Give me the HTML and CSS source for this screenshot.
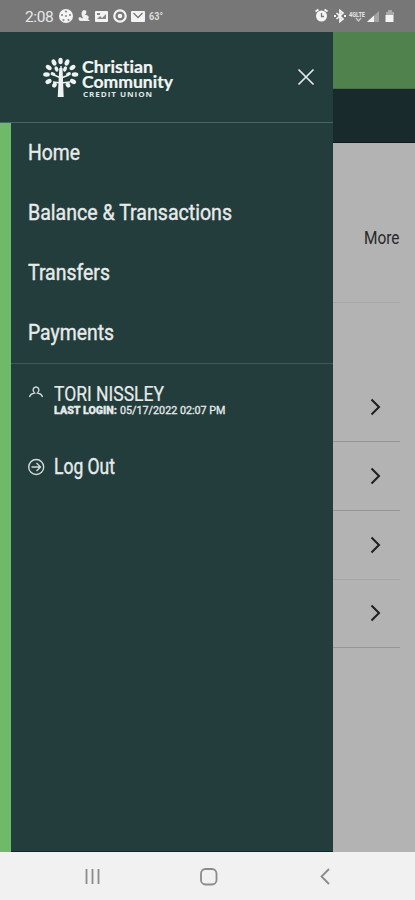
FILE: index.html
```html
<!DOCTYPE html>
<html lang="en">
<head>
<meta charset="utf-8">
<title>Christian Community Credit Union</title>
<link rel="stylesheet" href="styles.css">
</head>
<body>
<div class="phone">
  <header class="status">
    <span class="clock">2:08</span>
    <svg class="status-left" width="108" height="18" viewBox="0 0 108 18">
      <circle cx="8" cy="9" r="7" fill="#f4f4f4"/>
      <g fill="#888"><circle cx="8" cy="9" r="1"/><circle cx="8" cy="4.500" r="1.1"/><circle cx="12" cy="8" r="1.1"/><circle cx="4" cy="8" r="1.1"/><circle cx="5.500" cy="13" r="1.1"/><circle cx="10.500" cy="13" r="1.1"/></g>
      <path d="M26 3c3 0 3 3 1 5 3 0 5 2 3 4l2 2H23c-3 0-3-4-1-4 1 0 1 2 3 1-2-3-2-7 1-8z" fill="#eee"/>
      <rect x="37" y="4" width="13" height="11" rx="1" fill="#f4f4f4"/>
      <path d="M39 12l3-3 2 2 4-4v5zM39 6h3v2h-3z" fill="#888"/>
      <circle cx="62" cy="9" r="5.700" fill="#777" stroke="#f4f4f4" stroke-width="2.200"/><circle cx="62" cy="9" r="2.300" fill="#f4f4f4"/>
      <rect x="73" y="4" width="14" height="11" rx="1" fill="#f4f4f4"/><path d="M75.500 6l4.500 4.500L84.500 6" fill="none" stroke="#777" stroke-width="1.300"/>
      <text class="temp" x="91" y="12.500" textLength="14" lengthAdjust="spacingAndGlyphs">63°</text>
    </svg>
    <svg class="status-right" width="80" height="18" viewBox="0 0 80 18">
      <path d="M1.500 4.500l3-2M13.500 4.500l-3-2" stroke="#f4f4f4" stroke-width="2"/><circle cx="7.500" cy="9" r="5.500" fill="#f4f4f4"/><path d="M7.500 6v3.500H10" fill="none" stroke="#777" stroke-width="1.300"/>
      <path d="M22.500 6l6.500 6-3 2.500v-11L29 6l-6.500 6" fill="none" stroke="#f4f4f4" stroke-width="1.700"/><path d="M20 9h2M30 9h2" stroke="#f4f4f4" stroke-width="2"/>
      <text class="carrier" x="35" y="9.500" textLength="16" lengthAdjust="spacingAndGlyphs">4GLTE</text>
      <path d="M42 11l2.500 3 2.500-3" fill="none" stroke="#ccc" stroke-width="1.300"/>
      <path d="M65 4v11H53z" fill="#a3a3a3"/><path d="M60 8.500V15h-7z" fill="#f4f4f4"/>
      <path d="M72 5h2V3h4v2h2v3h-8z" fill="#aaa"/><path d="M71.500 8h8v7h-8z" fill="#f4f4f4"/>
    </svg>
  </header>

  <main class="screen">
    <section class="drawer">
      <div class="brand">
        <svg class="logo" width="134" height="44" viewBox="0 0 134 44">
          <g fill="none" stroke="#eef3f1" stroke-width="1.500"><path d="M18 23V10M18 22l-7-3M18 22l8-3M18 27l-8-1M18 27l9-1"/></g>
          <path d="M16.300 12h3.200l1.200 29h-6z" fill="#eef3f1"/>
          <g fill="#eef3f1">
            <ellipse cx="17.500" cy="5" rx="2.200" ry="3.300"/>
            <ellipse cx="11" cy="6.500" rx="2.200" ry="3.300" transform="rotate(-25 11 6.500)"/><ellipse cx="24" cy="6.500" rx="2.200" ry="3.300" transform="rotate(25 24 6.500)"/>
            <ellipse cx="5.700" cy="11.500" rx="2.200" ry="3.300" transform="rotate(-52 5.700 11.500)"/><ellipse cx="29.500" cy="11.500" rx="2.200" ry="3.300" transform="rotate(52 29.500 11.500)"/>
            <ellipse cx="3.500" cy="18.500" rx="3.300" ry="2.200"/><ellipse cx="32" cy="18.500" rx="3.300" ry="2.200"/>
            <ellipse cx="5.500" cy="25.500" rx="3.300" ry="2.200" transform="rotate(-28 5.500 25.500)"/><ellipse cx="30" cy="25.500" rx="3.300" ry="2.200" transform="rotate(28 30 25.500)"/>
            <ellipse cx="11.500" cy="29" rx="2.200" ry="2.700" transform="rotate(30 11.500 29)"/><ellipse cx="25" cy="29" rx="2.200" ry="2.700" transform="rotate(-30 25 29)"/>
            <ellipse cx="13.500" cy="13" rx="1.800" ry="2.800" transform="rotate(-25 13.500 13)"/><ellipse cx="22" cy="13" rx="1.800" ry="2.800" transform="rotate(25 22 13)"/>
            <ellipse cx="10" cy="18" rx="2.500" ry="1.700" transform="rotate(20 10 18)"/><ellipse cx="25.500" cy="18" rx="2.500" ry="1.700" transform="rotate(-20 25.500 18)"/>
          </g>
          <text class="brand-name" x="39" y="17" textLength="71" lengthAdjust="spacingAndGlyphs">Christian</text>
          <text class="brand-name" x="39" y="31.500" textLength="91" lengthAdjust="spacingAndGlyphs">Community</text>
          <text class="brand-sub" x="40" y="41" textLength="70" lengthAdjust="spacingAndGlyphs">CREDIT UNION</text>
        </svg>
        <svg class="close" width="18" height="18" viewBox="0 0 18 18"><path d="M1.500 1.500l15 15M16.500 1.500l-15 15"/></svg>
      </div>
      <div class="panel">
        <nav class="menu">
          <a><svg width="260" height="34"><text x="0" y="24" textLength="52" lengthAdjust="spacingAndGlyphs">Home</text></svg></a>
          <a><svg width="260" height="34"><text x="0" y="24" textLength="204" lengthAdjust="spacingAndGlyphs">Balance &amp; Transactions</text></svg></a>
          <a><svg width="260" height="34"><text x="0" y="24" textLength="82" lengthAdjust="spacingAndGlyphs">Transfers</text></svg></a>
          <a><svg width="260" height="34"><text x="0" y="24" textLength="86" lengthAdjust="spacingAndGlyphs">Payments</text></svg></a>
        </nav>
        <div class="account">
          <div class="entry user">
            <svg class="icon" width="18" height="18" viewBox="0 0 18 18"><path d="M1.500 13c.5-2 2.500-3.500 5-4C4 6.500 5 3 8 3S12 6.500 9.500 9c2.500.5 4.500 2 5 4"/></svg>
            <svg width="200" height="40"><text x="0" y="22" textLength="110" lengthAdjust="spacingAndGlyphs">TORI NISSLEY</text><text class="login strong" x="0" y="35" textLength="63" lengthAdjust="spacingAndGlyphs">LAST LOGIN:</text><text class="login" x="66" y="35" textLength="105.500" lengthAdjust="spacingAndGlyphs">05/17/2022 02:07 PM</text></svg>
          </div>
          <div class="entry">
            <svg class="icon" width="18" height="18" viewBox="0 0 18 18"><circle cx="8.200" cy="9" r="7.500"/><path d="M3.500 9H12.500M8.500 5l4 4-4 4"/></svg>
            <svg width="100" height="30"><text x="0" y="22" textLength="61" lengthAdjust="spacingAndGlyphs">Log Out</text></svg>
          </div>
        </div>
      </div>
    </section>
    <section class="page">
      <div class="page-top"></div>
      <div class="page-bar"></div>
      <div class="more"><svg width="52" height="26"><text x="1" y="19" textLength="35.500" lengthAdjust="spacingAndGlyphs">More</text></svg></div>
      <div class="rows">
        <div class="row first"><svg class="chevron" width="12" height="18"><path d="M2.500 1.500L10 9 2.500 16.500"/></svg></div>
        <div class="row"><svg class="chevron" width="12" height="18"><path d="M2.500 1.500L10 9 2.500 16.500"/></svg></div>
        <div class="row faint"><svg class="chevron" width="12" height="18"><path d="M2.500 1.500L10 9 2.500 16.500"/></svg></div>
        <div class="row"><svg class="chevron" width="12" height="18"><path d="M2.500 1.500L10 9 2.500 16.500"/></svg></div>
      </div>
    </section>
  </main>

  <footer class="navbar">
    <svg width="18" height="18"><path d="M2.500 1v15M8.500 1v15M14.500 1v15"/></svg>
    <svg width="18" height="18"><rect x="1" y="1" width="15.500" height="15.500" rx="4.500"/></svg>
    <svg width="18" height="18"><path d="M13 1L5.500 8.500 13 16"/></svg>
  </footer>
</div>
</body>
</html>
```
FILE: styles.css
```css
* { box-sizing: border-box; }
body { margin: 0; font-family: Roboto, "Liberation Sans", sans-serif; }
svg { display: block; flex: none; }
.phone { width: 415px; height: 900px; display: flex; flex-direction: column; overflow: hidden; }

.status { height: 32px; background: #777; display: flex; align-items: center; padding: 2px 21px 0 25px; }
.clock { width: 33px; color: #e8e8e8; font-size: 15.5px; letter-spacing: -0.4px; line-height: 18px; white-space: nowrap; }
.status-left { margin-top: -2px; }
.status-right { margin: -2px 0 0 auto; }
.temp { font-size: 10px; font-weight: 700; fill: #ddd; }
.carrier { font-size: 8px; font-weight: 700; fill: #e8e8e8; }

.screen { height: 820px; display: flex; background: #b3b3b3; }
.drawer { flex: none; width: 333px; display: flex; flex-direction: column; }
.brand { height: 91px; background: #233c3c; border-bottom: 1px solid #4a6462; display: flex; align-items: center; justify-content: space-between; padding: 2px 18px 0 43px; }
.brand-name { font-family: Lato, sans-serif; font-weight: 700; font-size: 17px; font-variant-ligatures: none; fill: #f1f5f4; stroke: #f1f5f4; stroke-width: 0.2px; }
.brand-sub { font-family: "Open Sans", sans-serif; font-weight: 700; font-size: 6.8px; letter-spacing: 0.8px; fill: #dfe7e4; }
.close { fill: none; stroke: #e4e9e8; stroke-width: 1.7px; margin-top: -2px; }

.panel { flex: 1; background: #233c3c; border-left: 11px solid #6eba69; box-shadow: inset 0 -1px #0c2624; }
.panel text { font-size: 22px; fill: #e6ebea; stroke: #e6ebea; stroke-width: 0.4px; }
.menu { height: 241px; border-bottom: 1px solid #405856; }
.menu a { height: 60px; padding-left: 17px; display: flex; align-items: center; }
.account { padding: 15px 0 0 17px; display: flex; flex-direction: column; gap: 33px; }
.entry { display: flex; align-items: center; gap: 8px; }
.user { height: 40px; align-items: flex-start; }
.icon { fill: none; stroke: #d2dbd8; stroke-width: 1.4px; }
.user .icon { margin-top: 5px; }
.panel .user text { font-size: 20px; stroke-width: 0.2px; }
.panel .user .login { font-size: 10.5px; stroke-width: 0.3px; }
.panel .user .strong { font-weight: 900; }

.page { flex: none; width: 82px; display: flex; flex-direction: column; }
.page-top { height: 57px; background: #50824d; border-bottom: 1px solid #46704a; }
.page-bar { height: 54px; background: #192a2d; border-bottom: 1px solid #10191b; }
.more { height: 160px; margin-right: 15px; border-bottom: 1px solid #a6a6a6; padding: 82px 0 0 30px; }
.more text { font-size: 17.5px; fill: #292929; }
.rows { margin: 70px 15px 0 0; }
.row { height: 68.6px; border-bottom: 1px solid #959595; display: flex; align-items: center; padding-left: 36px; }
.row.first { height: 69.4px; }
.row.faint { border-color: #a5a5a5; }
.chevron { fill: none; stroke: #1f1f1f; stroke-width: 2px; }

.navbar { height: 48px; background: #f1f1f1; display: grid; grid-template-columns: repeat(3, 18px); justify-content: center; gap: 98px; padding: 16px 0 0 2px; }
.navbar svg { fill: none; stroke: #8b8b8b; stroke-width: 1.8px; }
```
